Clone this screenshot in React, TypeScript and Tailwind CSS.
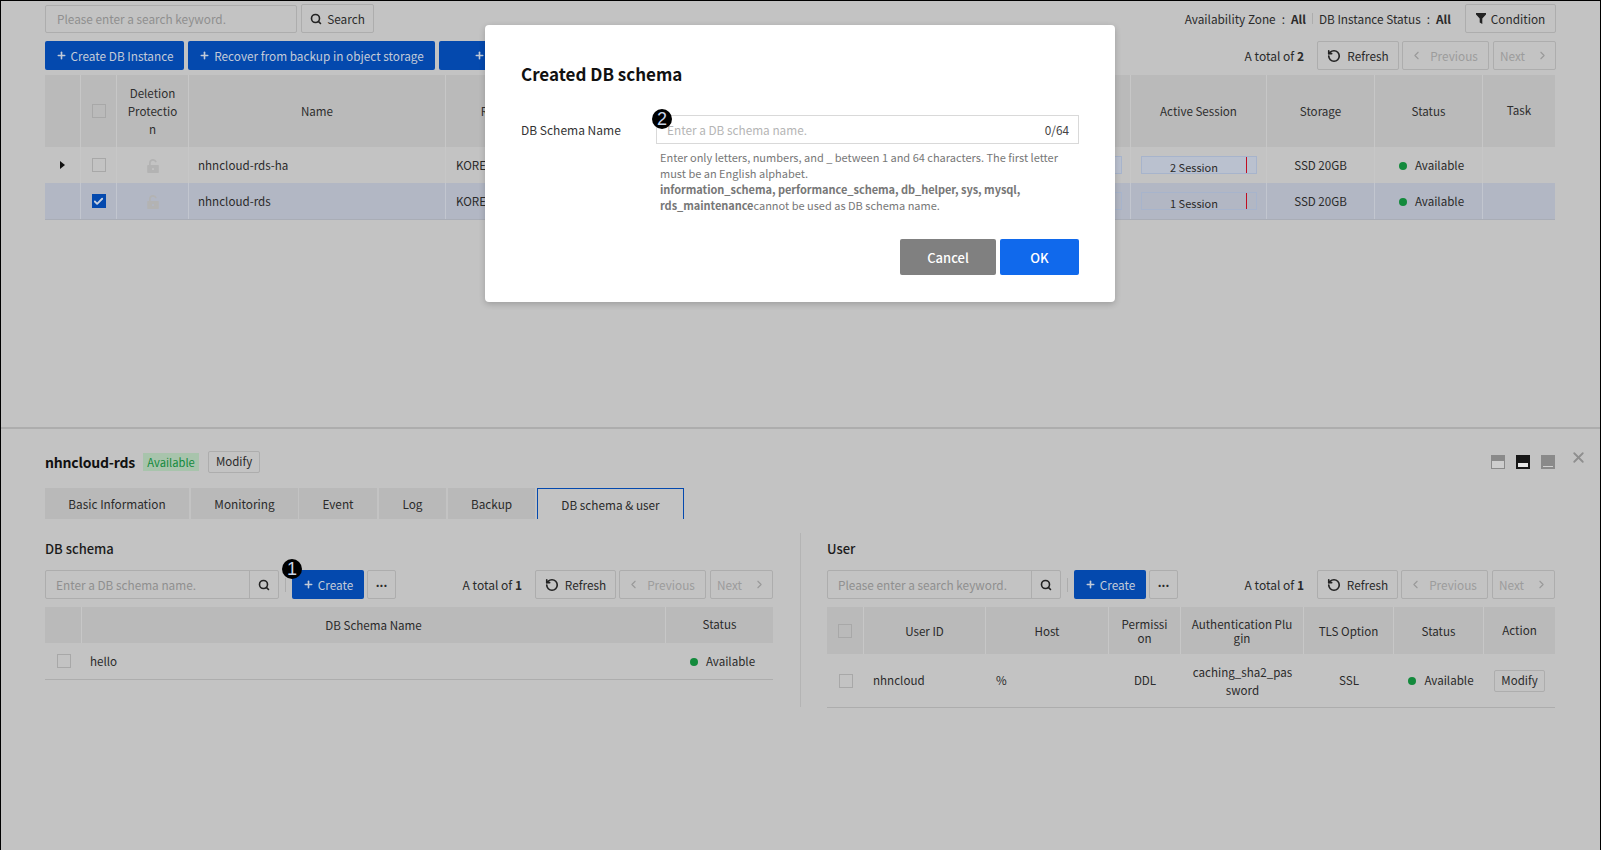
import { Search, RotateCcw, ChevronLeft, ChevronRight, Plus, Check, X } from "lucide-react";
import React from "react";

function Btn({ className = "", children }: { className?: string; children: React.ReactNode }) {
  return (
    <div className={"flex items-center justify-center rounded-[2px] border border-[#adadad] text-[11.8px] text-[#2a2a2a] h-[29px] bg-[#c3c3c3] " + className}>
      {children}
    </div>
  );
}

function Primary({ className = "", children }: { className?: string; children: React.ReactNode }) {
  return (
    <div className={"flex items-center justify-center gap-[4px] rounded-[2px] bg-[#0449ae] text-[11.8px] text-[#c3cbd8] h-[29px] whitespace-nowrap " + className}>
      <Plus size={11} strokeWidth={3.5} />
      {children}
    </div>
  );
}

function Pager({ total, w1 = "w-[82px]" }: { total: string; w1?: string }) {
  return (
    <div className="flex items-center">
      <span className="text-[12px] text-[#2a2a2a] mr-[13px]">
        A total of <b className="font-bold">{total}</b>
      </span>
      <Btn className={w1 + " gap-[6px]"}>
        <RotateCcw size={14} strokeWidth={2.8} className="text-[#222]" />
        Refresh
      </Btn>
      <Btn className="w-[87px] ml-[3px] gap-[7px] pr-[3px] text-[#9c9c9c]">
        <ChevronLeft size={13} className="text-[#999]" />
        Previous
      </Btn>
      <Btn className="w-[63px] ml-[4px] gap-[11px] text-[#9c9c9c]">
        Next
        <ChevronRight size={13} className="text-[#999]" />
      </Btn>
    </div>
  );
}

function Cbox({ checked = false }: { checked?: boolean }) {
  return checked ? (
    <div className="w-[14px] h-[14px] bg-[#0449ae] flex items-center justify-center">
      <Check size={11} strokeWidth={4} className="text-[#c9d2e0]" />
    </div>
  ) : (
    <div className="w-[14px] h-[14px] border border-[#a8a8a8]" />
  );
}

function LockIcon() {
  return (
    <svg width="12" height="14" viewBox="0 0 12 14" fill="#b3b3b3">
      <path d="M1 6h10a.8.8 0 0 1 .8.8v6.4a.8.8 0 0 1-.8.8H1a.8.8 0 0 1-.8-.8V6.800A.8.8 0 0 1 1 6zm5 3a1.100 1.100 0 0 0-.6 2h1.200A1.100 1.100 0 0 0 6 9z" />
      <path d="M2 6V4a4 4 0 0 1 7.800-1.200L8.200 3.400A2.300 2.300 0 0 0 3.700 4v2z" />
    </svg>
  );
}

function Dot() {
  return <span className="w-[8px] h-[8px] rounded-full bg-[#138a3c] inline-block" />;
}

function Badge({ n, className }: { n: string; className: string }) {
  return (
    <div className={"absolute w-[20px] h-[20px] rounded-full bg-black text-[#c9d4e8] text-[18px] font-['Liberation_Sans',sans-serif] leading-[20px] text-center " + className}>
      {n}
    </div>
  );
}

function SearchBox({ placeholder }: { placeholder: string }) {
  return (
    <div className="flex h-[29px] w-[234px] border border-[#adadad] rounded-[2px]">
      <div className="flex-1 pl-[10px] text-[11.8px] leading-[27px] text-[#8f8f8f]">{placeholder}</div>
      <div className="w-[29px] border-l border-[#adadad] flex items-center justify-center">
        <Search size={12} strokeWidth={3.2} className="text-[#222]" />
      </div>
    </div>
  );
}

function Toolbar({ placeholder }: { placeholder: string }) {
  return (
    <div className="flex items-center justify-between h-[31px]">
      <div className="flex items-center">
        <SearchBox placeholder={placeholder} />
        <div className="w-px h-[14px] bg-[#adadad] mx-[6px]" />
        <Primary className="w-[72px]">Create</Primary>
        <Btn className="w-[29px] ml-[3px] font-bold leading-none pb-[5px]">...</Btn>
      </div>
      <Pager total="1" w1="w-[81px]" />
    </div>
  );
}

const headCell = "flex items-center justify-center text-center border-r border-[#c7c7c7] px-[6px] leading-[18px] break-all";

function SessionBar({ label, full }: { label: string; full: boolean }) {
  return (
    <div className={"relative w-[116px] h-[18px] border border-[#a7b4cc] " + (full ? "bg-[#bac1cf]" : "")}>
      <div className="w-[105px] text-center text-[11px] leading-[21px]">{label}</div>
      <div className="absolute left-[104px] top-0 bottom-0 w-px bg-[#c00d22]" />
    </div>
  );
}

function TopRow({ selected, arrow, name }: { selected: boolean; arrow: boolean; name: string }) {
  const b = selected ? "border-[#c2c6cf]" : "border-[#c7c7c7]";
  return (
    <div className={"grid grid-cols-[36px_36px_72px_257px_108px_246px_331px_136px_108px_108px_72px] text-[11.6px] text-[#2a2a2a] " + (selected ? "h-[37px] bg-[#b2b7c4] border-b border-[#a9adb6]" : "h-[36px]")}>
      <div className={"flex items-center justify-center border-r " + b}>
        {arrow && <span className="w-0 h-0 border-y-[4px] border-y-transparent border-l-[5px] border-l-[#111]" />}
      </div>
      <div className={"flex items-center justify-center border-r " + b}><Cbox checked={selected} /></div>
      <div className={"flex items-center justify-center pt-px border-r " + b}><LockIcon /></div>
      <div className={"flex items-center px-[9px] pt-[2px] border-r " + b}>{name}</div>
      <div className={"flex items-center pl-[10px] pt-[2px] whitespace-nowrap border-r " + b}>KOREA(Pangyo)</div>
      <div className={"border-r " + b} />
      <div className={"flex items-center justify-end pr-[8px] border-r " + b}>
        <div className={"w-[100px] h-[18px] border border-[#a7b4cc] " + (selected ? "" : "bg-[#bac1cf]")} />
      </div>
      <div className={"flex items-center justify-center border-r " + b}>
        <SessionBar label={selected ? "1 Session" : "2 Session"} full={!selected} />
      </div>
      <div className={"flex items-center justify-center pt-px border-r " + b}>SSD 20GB</div>
      <div className={"flex items-center justify-center gap-[8px] pl-[6px] pt-[2px] border-r " + b}><Dot />Available</div>
      <div />
    </div>
  );
}

export default function App() {
  return (
    <div className="relative w-[1601px] h-[850px] overflow-hidden bg-[#c3c3c3] border-x border-t border-black text-[#2a2a2a] text-[11.8px] font-['Noto_Sans_CJK_KR','Noto_Sans',sans-serif]">
      {/* Top pane */}
      <div className="h-[428px] border-b-2 border-[#adadad] px-[44px] pt-[3px]">
        <div className="flex items-center justify-between h-[29px]">
          <div className="flex items-center">
            <div className="w-[252px] h-[28px] border border-[#adadad] rounded-[2px] pl-[11px] leading-[26px] text-[#8f8f8f]">Please enter a search keyword.</div>
            <Btn className="w-[73px] ml-[4px] gap-[5px]">
              <Search size={12} strokeWidth={3.2} className="text-[#222]" />
              Search
            </Btn>
          </div>
          <div className="flex items-center">
            <span>Availability Zone</span>
            <span className="mx-[6px]">:</span>
            <b className="font-bold">All</b>
            <span className="w-px h-[11px] bg-[#adadad] mx-[6px]" />
            <span>DB Instance Status</span>
            <span className="mx-[6px]">:</span>
            <b className="font-bold">All</b>
            <Btn className="w-[91px] ml-[14px] gap-[5px]">
              <svg width="10" height="11" viewBox="0 0 10 11" fill="#222"><path d="M0 0h10v1.500L6.300 5.600V11L3.700 9.500V5.600L0 1.500z" /></svg>
              Condition
            </Btn>
          </div>
        </div>
        <div className="flex items-center justify-between h-[29px] mt-[8px]">
          <div className="flex items-center gap-[4px]">
            <Primary className="w-[139px]">Create DB Instance</Primary>
            <Primary className="w-[247px]">Recover from backup in object storage</Primary>
            <Primary className="w-[120px]">Create</Primary>
          </div>
          <Pager total="2" />
        </div>
        {/* Instances table */}
        <div className="mt-[5px] w-[1510px]">
          <div className="grid grid-cols-[36px_36px_72px_257px_108px_246px_331px_136px_108px_108px_72px] h-[72px] bg-[#bababa] text-[#2e2e2e] text-[11.6px]">
            <div className={headCell} />
            <div className={headCell}><Cbox /></div>
            <div className={headCell + " !px-[10px]"}>Deletion Protection</div>
            <div className={headCell}>Name</div>
            <div className={headCell}>Region</div>
            <div className={headCell} />
            <div className={headCell} />
            <div className={headCell}>Active Session</div>
            <div className={headCell}>Storage</div>
            <div className={headCell}>Status</div>
            <div className="flex items-center justify-center">Task</div>
          </div>
          <TopRow selected={false} arrow name="nhncloud-rds-ha" />
          <TopRow selected arrow={false} name="nhncloud-rds" />
        </div>
      </div>

      {/* Bottom pane */}
      <div className="px-[44px] pt-[21px]">
        <div className="flex items-center justify-between h-[24px]">
          <div className="flex items-center">
            <b className="text-[14px] font-bold text-[#111] tracking-[-0.2px]">nhncloud-rds</b>
            <span className="ml-[8px] h-[18px] w-[56px] bg-[#a8c4ac] text-[#138a3c] text-[11.2px] leading-[18px] text-center">Available</span>
            <Btn className="ml-[9px] w-[52px] !h-[22px] !text-[11.5px]">Modify</Btn>
          </div>
          <div className="flex items-center mr-[1px]">
            <div className="w-[14px] h-[14px] bg-[#8a8a8a] p-px flex items-end"><div className="w-full h-[7px] bg-[#cdcdcd]" /></div>
            <div className="w-[14px] h-[14px] bg-[#161616] ml-[11px] px-[2px] pb-[2px] flex items-end"><div className="w-full h-[4px] bg-[#e6e6e6]" /></div>
            <div className="w-[14px] h-[14px] bg-[#8a8a8a] ml-[11px] px-[2px] pb-[2px] flex items-end"><div className="w-full h-px bg-[#d0d0d0]" /></div>
          </div>
        </div>
        <X size={17} strokeWidth={2.6} className="absolute right-[13px] top-[448px] text-[#8f8f8f]" />

        {/* Tabs */}
        <div className="flex h-[31px] mt-[14px] text-[11.8px] leading-[31px] text-center">
          <div className="w-[144px] bg-[#b9b9b9] mr-[2px]">Basic Information</div>
          <div className="w-[107px] bg-[#b9b9b9] mr-[1px]">Monitoring</div>
          <div className="w-[78px] bg-[#b9b9b9] mr-[2px]">Event</div>
          <div className="w-[67px] bg-[#b9b9b9] mr-[2px]">Log</div>
          <div className="w-[87px] bg-[#b9b9b9] mr-[2px]">Backup</div>
          <div className="w-[147px] border-x border-t border-[#0449ae]">DB schema &amp; user</div>
        </div>

        <div className="flex mt-[14px] h-[174px]">
          {/* DB schema */}
          <div className="w-[728px]">
            <div className="text-[13px] font-medium leading-[32px] h-[37px] -mb-[1px] text-[#1b1b1b]">DB schema</div>
            <Toolbar placeholder="Enter a DB schema name." />
            <div className="mt-[7px] grid grid-cols-[37px_584px_107px] h-[36px] bg-[#bababa] text-[11.6px]">
              <div className={headCell} />
              <div className={headCell}>DB Schema Name</div>
              <div className="flex items-center justify-center">Status</div>
            </div>
            <div className="grid grid-cols-[37px_584px_107px] h-[37px] border-b border-[#adadad] text-[11.6px]">
              <div className="flex items-center justify-center"><Cbox /></div>
              <div className="flex items-center px-[8px] pt-[2px]">hello</div>
              <div className="flex items-center justify-center gap-[8px] pl-[6px] pt-px"><Dot />Available</div>
            </div>
          </div>
          <div className="w-px bg-[#b4b4b4] ml-[27px] mr-[26px]" />
          {/* User */}
          <div className="w-[728px]">
            <div className="text-[13px] font-medium leading-[32px] h-[37px] -mb-[1px] text-[#1b1b1b]">User</div>
            <Toolbar placeholder="Please enter a search keyword." />
            <div className="mt-[7px] grid grid-cols-[37px_122px_123px_72px_123px_90px_90px_71px] h-[47px] bg-[#bababa] text-[11.6px]">
              <div className={headCell}><Cbox /></div>
              <div className={headCell}>User ID</div>
              <div className={headCell}>Host</div>
              <div className={headCell + " !px-[10px] !leading-[14px]"}>Permission</div>
              <div className={headCell + " !px-[9px] !leading-[14px]"}>Authentication Plugin</div>
              <div className={headCell + " px-[2px]"}>TLS Option</div>
              <div className={headCell}>Status</div>
              <div className="flex items-center justify-center">Action</div>
            </div>
            <div className="grid grid-cols-[37px_122px_123px_72px_123px_90px_90px_71px] h-[54px] border-b border-[#adadad] text-[11.6px]">
              <div className="flex items-center justify-center"><Cbox /></div>
              <div className="flex items-center px-[9px]">nhncloud</div>
              <div className="flex items-center px-[10px]">%</div>
              <div className="flex items-center justify-center">DDL</div>
              <div className="flex items-center justify-center text-center break-all leading-[18px] px-[11px]">caching_sha2_password</div>
              <div className="flex items-center justify-center">SSL</div>
              <div className="flex items-center justify-center gap-[8px] pl-[4px] whitespace-nowrap"><Dot />Available</div>
              <div className="flex items-center justify-center"><Btn className="w-[51px] !h-[22px] !text-[11.5px]">Modify</Btn></div>
            </div>
          </div>
        </div>
      </div>

      <Badge n="1" className="left-[281px] top-[558px]" />

      {/* Modal */}
      <div className="absolute left-[484px] top-[24px] w-[630px] h-[277px] bg-white rounded-[4px] shadow-[0_2px_6px_rgba(0,0,0,0.2)] px-[36px] pt-[34px]">
        <div className="text-[17px] font-bold text-[#111] leading-[30px]">Created DB schema</div>
        <div className="flex mt-[26px]">
          <div className="w-[135px] text-[12px] leading-[30px] text-[#333]">DB Schema Name</div>
          <div className="w-[423px]">
            <div className="flex justify-between h-[29px] border border-[#d9d9d9] pl-[10px] pr-[9px] leading-[27px] text-[11.8px]">
              <span className="text-[#b5b5b5]">Enter a DB schema name.</span>
              <span className="text-[#444]">0/64</span>
            </div>
            <div className="mt-[5px] pl-[4px] text-[11px] leading-[16px] text-[#777]">
              Enter only letters, numbers, and _ between 1 and 64 characters. The first letter must be an English alphabet.
              <br />
              <b className="font-bold tracking-[-0.05px]">information_schema, performance_schema, db_helper, sys, mysql, rds_maintenance</b>
              <span>cannot be used as DB schema name.</span>
            </div>
          </div>
        </div>
        <div className="flex justify-end gap-[4px] mt-[26px]">
          <div className="w-[96px] h-[36px] bg-[#808080] text-white text-[13px] font-medium leading-[37px] text-center rounded-[2px]">Cancel</div>
          <div className="w-[79px] h-[36px] bg-[#1069ec] text-white text-[13px] font-medium leading-[37px] text-center rounded-[2px]">OK</div>
        </div>
      </div>
      <Badge n="2" className="left-[651px] top-[108px]" />
    </div>
  );
}
